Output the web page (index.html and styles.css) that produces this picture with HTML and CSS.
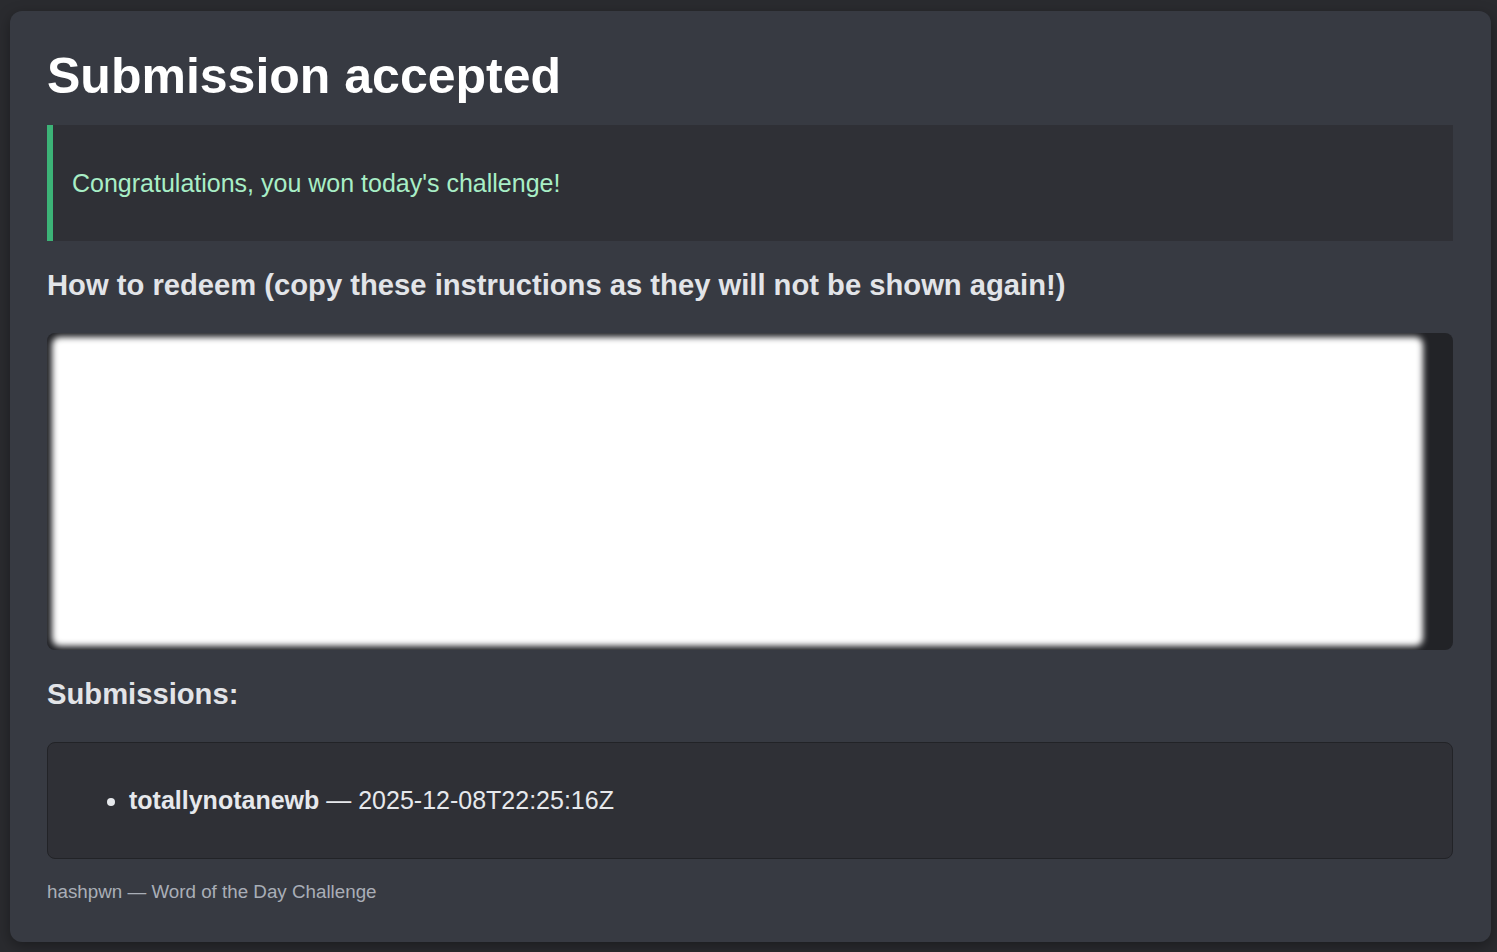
FILE: index.html
```html
<!DOCTYPE html>
<html lang="en">
<head>
<meta charset="utf-8">
<title>Submission accepted</title>
<link rel="stylesheet" href="styles.css">
</head>
<body>
<main class="card">
  <h1 class="title">Submission accepted</h1>
  <div class="alert">Congratulations, you won today's challenge!</div>
  <h2 class="section">How to redeem (copy these instructions as they will not be shown again!)</h2>
  <div class="secret">
    <div class="secret-blur"></div>
  </div>
  <h2 class="section section-subs">Submissions:</h2>
  <div class="subs">
    <ul class="subs-list">
      <li><strong>totallynotanewb</strong> — 2025-12-08T22:25:16Z</li>
    </ul>
  </div>
  <footer class="foot">hashpwn — Word of the Day Challenge</footer>
</main>
</body>
</html>
```
FILE: styles.css
```css
html, body {
  margin: 0;
  padding: 0;
}
body {
  background: #2a2b2f;
  font-family: "Liberation Sans", Arial, sans-serif;
  color: #e4e6ea;
  padding: 11px 6px 10px 10px;
}
.card {
  background: #373a42;
  border-radius: 12px;
  padding: 36px 38px 39px 37px;
  box-shadow: 0 4px 14px rgba(0, 0, 0, 0.35);
}
.title {
  margin: 0 0 20px;
  font-size: 50px;
  line-height: 58px;
  font-weight: 700;
  color: #ffffff;
}
.alert {
  background: #2f3036;
  border-left: 6px solid #3cb377;
  height: 116px;
  box-sizing: border-box;
  padding: 0 0 0 19px;
  display: flex;
  align-items: center;
  font-size: 25px;
  color: #a8eec6;
}
.section {
  margin: 27px 0 31px;
  font-size: 29.2px;
  line-height: 34px;
  font-weight: 700;
  color: #e2e4e8;
}
.section-subs {
  margin-top: 27px;
}
.secret {
  background: #222327;
  border-radius: 8px;
  height: 317px;
  box-sizing: border-box;
  padding: 4px 30px 4px 5px;
  display: flex;
  overflow: hidden;
}
.secret-blur {
  flex: 1;
  background: #ffffff;
  border-radius: 8px;
  filter: blur(3px);
}
.subs {
  background: #2f3036;
  border: 1px solid #222327;
  border-radius: 8px;
  height: 117px;
  box-sizing: border-box;
  padding-bottom: 2px;
  display: flex;
  align-items: center;
}
.subs-list {
  margin: 0;
  padding: 0 0 0 81px;
  font-size: 25px;
  line-height: 30px;
  color: #e6e8ec;
}
.subs-list strong {
  font-weight: 700;
}
.foot {
  margin-top: 22px;
  font-size: 18.8px;
  line-height: 22px;
  color: #a9aeb7;
}
```
